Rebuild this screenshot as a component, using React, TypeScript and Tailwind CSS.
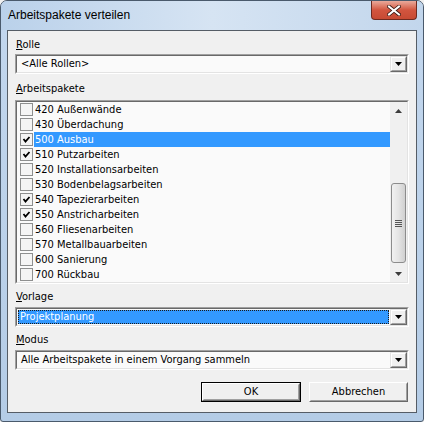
import React from 'react'

const items = [
  { label: '420 Außenwände', checked: false },
  { label: '430 Überdachung', checked: false },
  { label: '500 Ausbau', checked: true, selected: true },
  { label: '510 Putzarbeiten', checked: true },
  { label: '520 Installationsarbeiten', checked: false },
  { label: '530 Bodenbelagsarbeiten', checked: false },
  { label: '540 Tapezierarbeiten', checked: true },
  { label: '550 Anstricharbeiten', checked: true },
  { label: '560 Fliesenarbeiten', checked: false },
  { label: '570 Metallbauarbeiten', checked: false },
  { label: '600 Sanierung', checked: false },
  { label: '700 Rückbau', checked: false },
]

const font = { fontFamily: '"DejaVu Sans Condensed", "DejaVu Sans", sans-serif' }

const DownTri = () => (
  <svg width="7" height="4" viewBox="0 0 7 4">
    <polygon points="0,0 7,0 3.5,4" fill="#000" />
  </svg>
)

const Sunken: React.FC<{ className?: string; children: React.ReactNode }> = ({ className = '', children }) => (
  <div className={`border border-t-[#a0a0a0] border-l-[#a0a0a0] border-r-white border-b-white ${className}`}>
    <div className="h-full border border-t-[#696969] border-l-[#696969] border-r-[#e3e3e3] border-b-[#e3e3e3] bg-[#fafafa]">
      {children}
    </div>
  </div>
)

const DropButton = () => (
  <div className="w-[17px] h-full border border-t-[#e3e3e3] border-l-[#e3e3e3] border-r-[#696969] border-b-[#696969]">
    <div className="h-full border border-t-white border-l-white border-r-[#a0a0a0] border-b-[#a0a0a0] bg-[#f0f0f0] flex items-center justify-center">
      <DownTri />
    </div>
  </div>
)

const Combo: React.FC<{ text: string; focused?: boolean }> = ({ text, focused }) => (
  <Sunken className="h-[20px]">
    <div className="flex h-full items-stretch">
      <div className="flex-1 flex items-center p-[1px]">
        {focused ? (
          <div className="w-full h-full bg-[#3399ff] border border-dotted border-[#1a1a1a] text-white flex items-center pl-[1px]">
            {text}
          </div>
        ) : (
          <div className="pl-[3px] text-black">{text}</div>
        )}
      </div>
      <DropButton />
    </div>
  </Sunken>
)

const Checkbox: React.FC<{ checked: boolean }> = ({ checked }) => (
  <div className="w-[13px] h-[13px] border border-[#8e8f8f] bg-[#f4f4f4] flex items-center justify-center">
    {checked && (
      <svg width="9" height="9" viewBox="0 0 9 9">
        <polyline points="1.5,4 3.5,6.5 7.5,2" fill="none" stroke="#000" strokeWidth="1.8" />
      </svg>
    )}
  </div>
)

const Button: React.FC<{ label: string; isDefault?: boolean; className?: string }> = ({ label, isDefault, className = '' }) => (
  <div className={`h-[20px] ${isDefault ? 'border border-black' : ''} ${className}`}>
    <div className="h-full border border-t-white border-l-white border-r-[#696969] border-b-[#696969]">
      <div className="h-full border border-t-[#f0f0f0] border-l-[#f0f0f0] border-r-[#a0a0a0] border-b-[#a0a0a0] bg-[#f0f0f0] flex items-center justify-center text-black">
        {label}
      </div>
    </div>
  </div>
)

export default function App() {
  return (
    <div className="w-[424px] h-[422px] bg-[#f0f0f0]" style={font}>
      <div className="w-[424px] h-[422px] rounded-t-[7px] rounded-b-[3px] border border-[#4a5a6c] bg-gradient-to-b from-[#c3d7ee] via-[#bcd2ea] to-[#b4cce6] flex flex-col overflow-hidden">
        {/* title bar */}
        <div className="h-[29px] flex items-start justify-between bg-gradient-to-r from-[#bad1ea] via-[#d6e4f3] to-[#c2d6ec]">
          <div className="pl-[7px] pt-[7px] text-[12px] leading-[15px] text-black" style={{ fontFamily: '"Liberation Sans", Arial, sans-serif' }}>
            Arbeitspakete verteilen
          </div>
          <div className="mr-[6px] w-[46px] h-[19px] rounded-b-[4px] border border-t-0 border-[#6e2a20] bg-gradient-to-b from-[#e9a99b] via-[#d2553f] to-[#c74a33] flex items-center justify-center">
            <svg width="14" height="11" viewBox="0 0 14 11">
              <path d="M2 1.5 L12 9.5 M12 1.5 L2 9.5" stroke="#3b1a14" strokeWidth="3.6" strokeLinecap="square" />
              <path d="M2 1.5 L12 9.5 M12 1.5 L2 9.5" stroke="#ffffff" strokeWidth="2" strokeLinecap="square" />
            </svg>
          </div>
        </div>

        {/* client area */}
        <div className="mx-[6px] h-[383px] border border-[#555d66] bg-[#f0f0f0] px-[7px] pt-[7px] text-[11px] text-black flex flex-col">
          <div className="h-[14px] leading-[14px] pl-[1px]">
            <span className="underline">R</span>olle
          </div>
          <div className="mt-[2px]">
            <Combo text="<Alle Rollen>" />
          </div>

          <div className="mt-[8px] h-[14px] leading-[14px] pl-[1px]">
            <span className="underline">A</span>rbeitspakete
          </div>
          <Sunken className="mt-[4px] h-[184px]">
            <div className="flex h-full">
              <div className="flex-1 flex flex-col">
                {items.map((it) => (
                  <div key={it.label} className="h-[15px] flex items-center">
                    <div className="w-[17px] flex items-center justify-end pr-[1px]">
                      <Checkbox checked={it.checked} />
                    </div>
                    <div
                      className={`flex-1 h-full leading-[15px] pl-[1px] ${it.selected ? 'bg-[#3399ff] text-white' : 'text-black'}`}
                    >
                      {it.label}
                    </div>
                  </div>
                ))}
              </div>
              {/* scrollbar */}
              <div className="w-[17px] h-full flex flex-col bg-[#f0f0f0]">
                <div className="h-[17px] flex items-center justify-center">
                  <svg width="7" height="4" viewBox="0 0 7 4">
                    <polygon points="3.5,0 7,4 0,4" fill="#3c3c3c" />
                  </svg>
                </div>
                <div className="flex-1 flex flex-col px-[1px]">
                  <div className="h-[64px]" />
                  <div className="h-[80px] rounded-[3px] border border-[#8c8c8c] bg-gradient-to-r from-[#f1f1f1] via-[#e4e4e4] to-[#d0d0d0] flex items-center justify-center">
                    <div className="flex flex-col gap-[1px]">
                      <div className="w-[7px] h-[1px] bg-[#555]" />
                      <div className="w-[7px] h-[1px] bg-[#555]" />
                      <div className="w-[7px] h-[1px] bg-[#555]" />
                      <div className="w-[7px] h-[1px] bg-[#555]" />
                    </div>
                  </div>
                </div>
                <div className="h-[17px] flex items-center justify-center">
                  <svg width="7" height="4" viewBox="0 0 7 4">
                    <polygon points="0,0 7,0 3.5,4" fill="#3c3c3c" />
                  </svg>
                </div>
              </div>
            </div>
          </Sunken>

          <div className="mt-[6px] h-[14px] leading-[14px] pl-[1px]">
            <span className="underline">V</span>orlage
          </div>
          <div className="mt-[3px]">
            <Combo text="Projektplanung" focused />
          </div>

          <div className="mt-[6px] h-[14px] leading-[14px] pl-[1px]">
            <span className="underline">M</span>odus
          </div>
          <div className="mt-[3px]">
            <Combo text="Alle Arbeitspakete in einem Vorgang sammeln" />
          </div>

          <div className="mt-[12px] flex justify-end gap-[8px] pr-[1px]">
            <Button label="OK" isDefault className="w-[100px]" />
            <Button label="Abbrechen" className="w-[99px]" />
          </div>
        </div>
      </div>
    </div>
  )
}
